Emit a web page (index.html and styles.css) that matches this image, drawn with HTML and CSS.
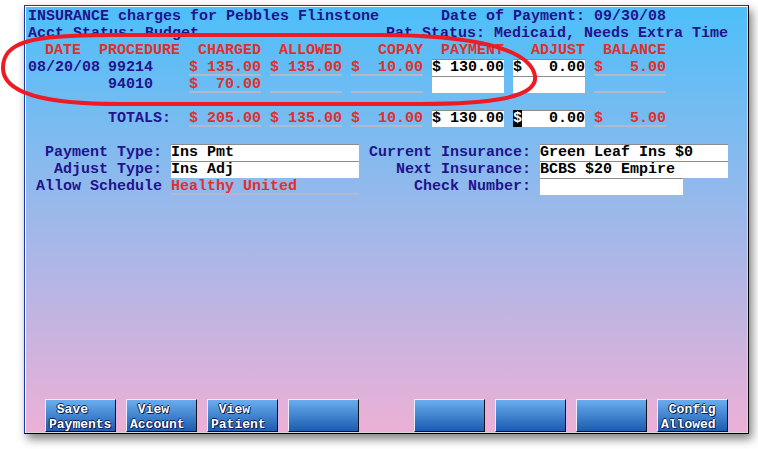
FILE: index.html
```html
<!DOCTYPE html>
<html>
<head>
<meta charset="utf-8">
<link rel="stylesheet" href="styles.css">
</head>
<body>
<div class="stage">
  <div class="window">
    <div class="line"><span class="title">INSURANCE charges for Pebbles Flinstone</span><span>Date of Payment: 09/30/08</span></div>
    <div class="line"><span class="status">Acct Status: Budget</span><span>Pat Status: Medicaid, Needs Extra Time</span></div>

    <div class="table">
      <div class="hdr hdate">DATE</div>
      <div class="hdr">PROCEDURE</div>
      <div class="hdr num">CHARGED</div>
      <div class="hdr num">ALLOWED</div>
      <div class="hdr num">COPAY</div>
      <div class="hdr num">PAYMENT</div>
      <div class="hdr num">ADJUST</div>
      <div class="hdr num">BALANCE</div>

      <div>08/20/08</div>
      <div class="proc">99214</div>
      <div class="ro">$ 135.00</div>
      <div class="ro">$ 135.00</div>
      <div class="ro">$  10.00</div>
      <div class="in">$ 130.00</div>
      <div class="in">$   0.00</div>
      <div class="ro">$   5.00</div>

      <div></div>
      <div class="proc">94010</div>
      <div class="ro">$  70.00</div>
      <div class="ro"></div>
      <div class="ro"></div>
      <div class="in"></div>
      <div class="in"></div>
      <div class="ro"></div>

      <div class="blank"></div>

      <div></div>
      <div class="proc">TOTALS:</div>
      <div class="ro">$ 205.00</div>
      <div class="ro">$ 135.00</div>
      <div class="ro">$  10.00</div>
      <div class="in">$ 130.00</div>
      <div class="in"><span class="cur">$</span>   0.00</div>
      <div class="ro">$   5.00</div>
    </div>

    <div class="form">
      <div class="lbl">Payment Type:</div>
      <div class="in">Ins Pmt</div>
      <div class="lbl">Current Insurance:</div>
      <div class="in">Green Leaf Ins $0</div>

      <div class="lbl">Adjust Type:</div>
      <div class="in">Ins Adj</div>
      <div class="lbl">Next Insurance:</div>
      <div class="in">BCBS $20 Empire</div>

      <div class="lbl">Allow Schedule</div>
      <div class="ro">Healthy United</div>
      <div class="lbl">Check Number:</div>
      <div class="in short"></div>
    </div>

    <div class="bar">
      <div class="group">
        <div class="btn"> Save
Payments</div>
        <div class="btn"> View
Account</div>
        <div class="btn"> View
Patient</div>
        <div class="btn"></div>
      </div>
      <div class="group">
        <div class="btn"></div>
        <div class="btn"></div>
        <div class="btn"></div>
        <div class="btn"> Config
Allowed</div>
      </div>
    </div>
  </div>

  <svg class="annot" width="758" height="449" viewBox="0 0 758 449">
    <path d="M 3 68 C 3 42, 30 35, 110 35 L 380 35 C 470 35, 530 48, 535 76 C 538 98, 490 104, 420 104 L 120 104 C 40 104, 3 92, 3 68 Z" fill="none" stroke="#ee1b24" stroke-width="4"/>
  </svg>
</div>
</body>
</html>
```

FILE: styles.css
```css
* { box-sizing: border-box; }

body {
  margin: 0;
  background: #fff;
  font-family: "Liberation Mono", "DejaVu Sans Mono", monospace;
  font-weight: bold;
  font-size: 15px;
  line-height: 17px;
  color: #22138c;
}

.stage {
  position: relative;
  width: 758px;
  height: 449px;
  padding: 5px 0 0 24px;
}

.window {
  width: 725px;
  height: 429px;
  border: 1px solid;
  border-color: #1b3aa0 #000 #000 #1b3aa0;
  box-shadow: inset 1px 1px 0 #fff, inset -1px -1px 0 #d8d8d8, 3px 5px 9px rgba(0, 0, 0, 0.5);
  background: linear-gradient(#4cbff9, #9db8ea 50%, #edb0d6);
  padding: 2px 0 1px 3px;
  display: flex;
  flex-direction: column;
  white-space: pre;
}

.line { display: flex; height: 17px; }
.title { width: 413px; }
.status { width: 358px; }

.table {
  display: grid;
  grid-template-columns: 62px 81px repeat(6, 72px);
  grid-auto-rows: 17px;
  column-gap: 9px;
}

.hdr { color: #e0302c; }
.hdate { padding-left: 17px; }
.num { text-align: right; }
.proc { padding-left: 9px; }
.blank { grid-column: 1 / -1; }

.ro {
  color: #e0302c;
  border-bottom: 2px solid #b4b8c8;
}

.in {
  background: #fff;
  color: #000;
  box-shadow: inset 0 1px 0 #8c8c8c;
}

.cur {
  display: inline-block;
  height: 17px;
  background: #000;
  color: #fff;
}

.form {
  margin-top: 17px;
  display: grid;
  grid-template-columns: 134px 188px 163px 188px;
  grid-auto-rows: 17px;
  column-gap: 9px;
}

.lbl { text-align: right; }
.short { width: 143px; }

.bar {
  margin-top: auto;
  display: flex;
  justify-content: space-between;
  padding: 0 20px 0 17px;
}

.group { display: flex; gap: 10px; }

.btn {
  width: 71px;
  height: 33px;
  border: 1px solid;
  border-color: #e8eef8 #101010 #101010 #e8eef8;
  background: linear-gradient(#6aadee, #1a5cb0);
  color: #fff;
  font-size: 13px;
  line-height: 15px;
  padding: 2px 0 0 3px;
  text-shadow: 1px 1px 0 #0a1e50, -1px 0 0 #0a1e50, 0 -1px 0 #0a1e50;
}

.annot {
  position: absolute;
  left: 0;
  top: 0;
  pointer-events: none;
}
```
